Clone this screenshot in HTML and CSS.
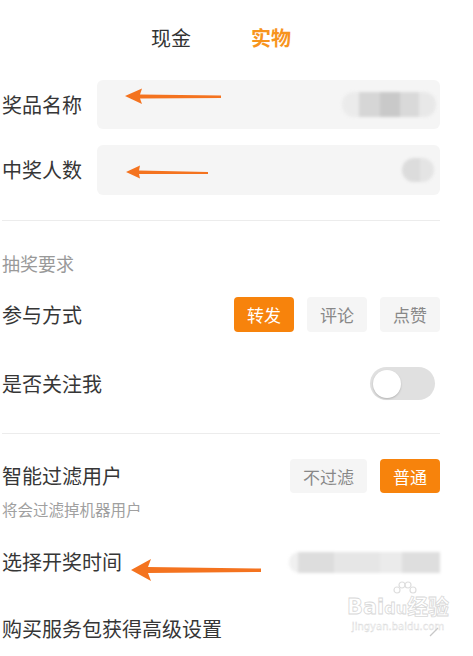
FILE: index.html
```html
<!DOCTYPE html>
<html lang="zh">
<head>
<meta charset="utf-8">
<link rel="stylesheet" href="styles.css">
</head>
<body>
<div class="page">
  <div class="tabs">
    <span class="tab">现金</span>
    <span class="tab active">实物</span>
  </div>

  <div class="field-row first">
    <span class="label">奖品名称</span>
    <div class="input">
      <span class="blur blur-name"></span>
    </div>
    <svg class="arrow arrow-1" width="100" height="20" viewBox="0 0 100 20"><path d="M0 9 L17 1.5 L15 7.5 L96 8.5 L96 11 L15 11.5 L17 17 Z" fill="#f4731f"/></svg>
  </div>

  <div class="field-row second">
    <span class="label">中奖人数</span>
    <div class="input">
      <span class="blur blur-count"></span>
    </div>
    <svg class="arrow arrow-2" width="86" height="16" viewBox="0 0 86 16"><path d="M0 8 L14 1.5 L13 6.5 L82 8 L82 10 L13 10 L14 14.5 Z" fill="#f4731f"/></svg>
  </div>

  <div class="divider div-1"></div>

  <div class="section-title">抽奖要求</div>

  <div class="opt-row join">
    <span class="label">参与方式</span>
    <div class="btns">
      <span class="btn on">转发</span>
      <span class="btn">评论</span>
      <span class="btn">点赞</span>
    </div>
  </div>

  <div class="opt-row follow">
    <span class="label">是否关注我</span>
    <span class="toggle"><span class="knob"></span></span>
  </div>

  <div class="divider div-2"></div>

  <div class="opt-row filter">
    <span class="label">智能过滤用户</span>
    <div class="btns">
      <span class="btn wide">不过滤</span>
      <span class="btn on">普通</span>
    </div>
  </div>
  <div class="sub">将会过滤掉机器用户</div>

  <div class="opt-row time">
    <span class="label">选择开奖时间</span>
    <span class="blur blur-time"></span>
    <svg class="arrow arrow-3" width="132" height="24" viewBox="0 0 132 24"><path d="M0 12 L20 1 L17 9 L130 10.5 L130 14 L17 15 L20 23 Z" fill="#f4731f"/></svg>
  </div>

  <div class="opt-row buy">
    <span class="label">购买服务包获得高级设置</span>
    <div class="watermark">
      <svg class="paw" width="28" height="20" viewBox="0 0 28 20"><g fill="none" stroke="#dedede" stroke-width="1.2"><circle cx="6" cy="9" r="3"/><circle cx="11" cy="4" r="3"/><circle cx="17" cy="4" r="3"/><circle cx="22" cy="9" r="3"/></g></svg>
      <span class="wm-big">Bai<span class="wm-du">du</span>经验</span>
      <span class="wm-small">jingyan.baidu.com</span>
    </div>
    <svg class="chev" width="10" height="14" viewBox="0 0 10 14"><path d="M1 13 L9 5" stroke="#c8c8c8" stroke-width="1.2" fill="none"/></svg>
  </div>
</div>
</body>
</html>
```

FILE: styles.css
```css
* { box-sizing: border-box; }
html, body { margin: 0; padding: 0; background: #fff; }
body {
  font-family: "Noto Sans CJK SC", "Noto Sans", sans-serif;
  color: #333;
}
.page {
  width: 440px;
  padding-left: 2px;
  display: flex;
  flex-direction: column;
}
.tabs {
  height: 76px;
  display: flex;
  justify-content: center;
  align-items: center;
  gap: 60px;
}
.tab { font-size: 20px; color: #333; line-height: 1; }
.tab.active { color: #f7941d; font-weight: 700; }

.field-row {
  position: relative;
  display: flex;
  align-items: center;
  height: 49px;
}
.field-row.first { margin-top: 4px; }
.field-row.second { margin-top: 16px; height: 50px; }
.label { font-size: 20px; line-height: 1; color: #363636; white-space: nowrap; }
.field-row .label { width: 95px; flex: none; }
.input {
  flex: 1;
  height: 100%;
  background: #f5f5f5;
  border-radius: 6px;
  position: relative;
  display: flex;
  align-items: center;
  justify-content: flex-end;
  padding-right: 4px;
}
.blur { display: block; border-radius: 12px; filter: blur(1.5px); }
.blur-name {
  width: 94px; height: 25px;
  background: linear-gradient(90deg, #ebebeb 0 18%, #d6d6d6 18% 40%, #c9c9c9 40% 62%, #d9d9d9 62% 82%, #e8e8e8 82%);
}
.blur-count {
  width: 32px; height: 24px; margin-right: 2px;
  background: linear-gradient(90deg, #dcdcdc 0 55%, #e4e4e4 55%);
}
.arrow { position: absolute; }
.arrow-1 { left: 123px; top: 7px; }
.arrow-2 { left: 124px; top: 19px; }
.arrow-3 { left: 129px; top: 14px; }

.divider { height: 1px; background: #ececec; }
.div-1 { margin-top: 25px; }
.div-2 { margin-top: 33px; }

.section-title {
  margin-top: 22px;
  height: 40px;
  display: flex;
  align-items: center;
  font-size: 18px;
  color: #999;
}
.opt-row {
  position: relative;
  display: flex;
  align-items: center;
  justify-content: space-between;
}
.opt-row.join { margin-top: 14px; height: 35px; }
.opt-row.follow { margin-top: 35px; height: 33px; }
.opt-row.filter { margin-top: 25px; height: 34px; }
.opt-row.time { margin-top: 25px; height: 36px; }
.opt-row.buy { margin-top: 31px; height: 36px; }

.btns { display: flex; gap: 13px; height: 100%; }
.btn {
  width: 60px;
  height: 100%;
  border-radius: 4px;
  background: #f5f5f5;
  color: #888;
  font-size: 17px;
  display: flex;
  align-items: center;
  justify-content: center;
}
.btn.wide { width: 77px; }
.btn.on { background: #f7830c; color: #fff; }

.toggle {
  width: 65px; height: 33px;
  margin-right: 5px;
  border-radius: 17px;
  background: #e0e0e0;
  display: flex;
  align-items: center;
  padding-left: 3px;
}
.knob {
  width: 28px; height: 28px;
  border-radius: 50%;
  background: #fff;
  box-shadow: 0 1px 2px rgba(0,0,0,0.2);
}
.sub {
  margin-top: 6px;
  height: 20px;
  display: flex;
  align-items: center;
  font-size: 15.5px;
  color: #a0a0a0;
}
.blur-time {
  width: 151px; height: 21px;
  border-radius: 10px 0 0 10px;
  background: linear-gradient(90deg, #f0f0f0 0 6%, #dddddd 6% 30%, #e6e6e6 30% 60%, #ebebeb 60% 75%, #dedede 75%);
}
.chev {
  position: absolute;
  right: 1px; top: 12px;
}
.watermark {
  position: absolute;
  right: -4px; top: -30px;
  width: 92px;
  display: flex;
  flex-direction: column;
  align-items: center;
  font-family: "DejaVu Sans", "Noto Sans CJK SC", sans-serif;
  color: #fff;
  -webkit-text-stroke: 0.8px #d8d8d8;
  line-height: 1;
}
.paw { margin-left: 14px; margin-bottom: -4px; }
.wm-big { font-size: 21px; font-weight: 700; white-space: nowrap; }
.wm-du { font-size: 16px; }
.wm-small { font-size: 10px; margin-top: 4px; -webkit-text-stroke: 0.4px #d8d8d8; white-space: nowrap; }
```
